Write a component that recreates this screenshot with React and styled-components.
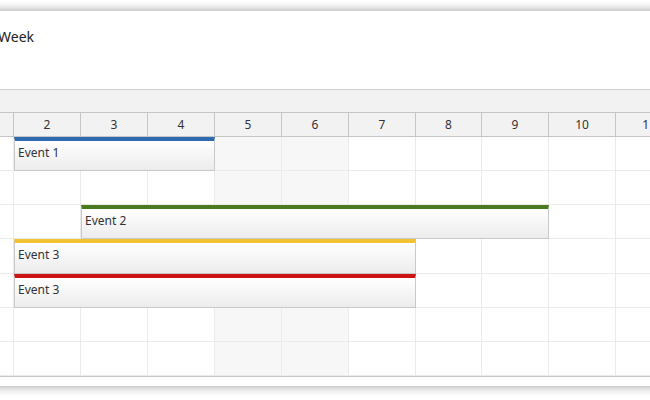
import React from "react";
import styled, { createGlobalStyle } from "styled-components";

const days = [1, 2, 3, 4, 5, 6, 7, 8, 9, 10, 11];
const weekend = [5, 6];
const rowCount = 7;
const columns = "67px 67px 67px 67px 67px 67px 67px 66px 67px 67px 67px";

const events = [
  { id: 1, text: "Event 1", row: 1, from: 2, to: 5, color: "#2e6ab0" },
  { id: 2, text: "Event 2", row: 3, from: 3, to: 10, color: "#4a7a1f" },
  { id: 3, text: "Event 3", row: 4, from: 2, to: 8, color: "#f1c232" },
  { id: 4, text: "Event 3", row: 5, from: 2, to: 8, color: "#cc1414" },
];

const GlobalStyle = createGlobalStyle`
  body {
    margin: 0;
    overflow: hidden;
    background: #ffffff;
    font-family: "Noto Sans", "DejaVu Sans", sans-serif;
  }
`;

// λ°”κΉ¥ μμ—­

const Page = styled.div`
  width: 650px;
  height: 400px;
  padding-top: 11px;
  box-sizing: border-box;
  overflow: hidden;
`;

const Card = styled.div`
  width: 820px;
  margin-left: -53px;
  padding-bottom: 9px;
  background: #ffffff;
  box-shadow: 0 0 10px rgba(0, 0, 0, 0.4);
`;

const Toolbar = styled.div`
  height: 78px;
  padding: 16px 0 0 51px;
  box-sizing: border-box;
`;

const Title = styled.div`
  font-size: 14px;
  line-height: 19px;
  color: #222;
`;

// μ¤μΌ€μ¤„λ¬ ν—¤λ”

const Scheduler = styled.div`
  border-top: 1px solid #cfcfcf;
  border-bottom: 1px solid #c6c6c6;
`;

const TopBar = styled.div`
  height: 22px;
  background: #f2f2f2;
  border-bottom: 1px solid #c6c6c6;
`;

const HeaderRow = styled.div`
  display: grid;
  grid-template-columns: ${columns};
  background: #f2f2f2;
  border-bottom: 1px solid #c6c6c6;
`;

const HeaderCell = styled.div`
  height: 23px;
  border-right: 1px solid #c6c6c6;
  display: flex;
  align-items: center;
  justify-content: center;
  font-size: 12px;
  color: #333;
`;

// λ³Έλ¬Έ κ·Έλ¦¬λ“

const Body = styled.div`
  display: grid;
  grid-template-columns: ${columns};
  grid-template-rows: 34px 34px 34px 35px 34px 34px 34px;
`;

const Cell = styled.div`
  grid-row: ${(p) => p.$row};
  grid-column: ${(p) => p.$col};
  border-right: 1px solid #ebebeb;
  border-bottom: 1px solid #ebebeb;
  background: ${(p) => (p.$weekend ? "#f7f7f7" : "#ffffff")};
`;

const Event = styled.div`
  grid-row: ${(p) => p.$row};
  grid-column: ${(p) => p.$from} / ${(p) => p.$to};
  z-index: 1;
  border: 1px solid #c9c9c9;
  border-top: 4px solid ${(p) => p.$color};
  background: linear-gradient(to bottom, #ffffff, #ececec);
  padding: 3px 0 0 3px;
  font-size: 12px;
  line-height: 17px;
  color: #333;
  overflow: hidden;
`;

const App = () => {
  const rows = Array.from({ length: rowCount }, (_, i) => i + 1);

  return (
    <>
      <GlobalStyle />
      <Page>
        <Card>
          <Toolbar>
            <Title>Week</Title>
          </Toolbar>
          <Scheduler>
            <TopBar />
            <HeaderRow>
              {days.map((d) => (
                <HeaderCell key={d}>{d}</HeaderCell>
              ))}
            </HeaderRow>
            <Body>
              {rows.map((r) =>
                days.map((d, i) => (
                  <Cell
                    key={`${r}-${d}`}
                    $row={r}
                    $col={i + 1}
                    $weekend={weekend.includes(d)}
                  />
                ))
              )}
              {events.map((ev) => (
                <Event
                  key={ev.id}
                  $row={ev.row}
                  $from={ev.from}
                  $to={ev.to}
                  $color={ev.color}
                >
                  {ev.text}
                </Event>
              ))}
            </Body>
          </Scheduler>
        </Card>
      </Page>
    </>
  );
};

export default App;
